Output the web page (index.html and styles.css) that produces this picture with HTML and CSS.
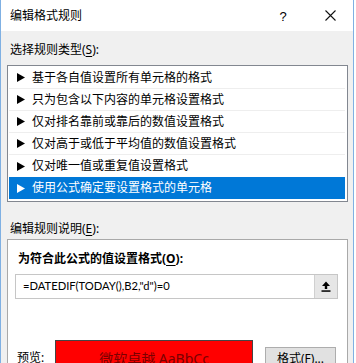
FILE: index.html
```html
<!DOCTYPE html>
<html>
<head>
<meta charset="utf-8">
<link rel="stylesheet" href="styles.css">
</head>
<body>
<div class="window">
  <div class="titlebar">
    <span class="title">编辑格式规则</span>
    <span class="help">?</span>
    <span class="close">
      <svg width="11" height="11" viewBox="0 0 11 11"><path d="M0.5 0.5 L10.5 10.5 M10.5 0.5 L0.5 10.5" stroke="#111" stroke-width="1.1" fill="none"/></svg>
    </span>
  </div>
  <div class="content">
    <div class="label first">选择规则类型(<u>S</u>):</div>
    <div class="listbox">
      <div class="row sep"><svg class="arrow" width="8" height="9" viewBox="0 0 8 9"><polygon points="0,0 8,4.5 0,9" fill="#000"/></svg><span>基于各自值设置所有单元格的格式</span></div>
      <div class="row sep"><svg class="arrow" width="8" height="9" viewBox="0 0 8 9"><polygon points="0,0 8,4.5 0,9" fill="#000"/></svg><span>只为包含以下内容的单元格设置格式</span></div>
      <div class="row sep"><svg class="arrow" width="8" height="9" viewBox="0 0 8 9"><polygon points="0,0 8,4.5 0,9" fill="#000"/></svg><span>仅对排名靠前或靠后的数值设置格式</span></div>
      <div class="row sep"><svg class="arrow" width="8" height="9" viewBox="0 0 8 9"><polygon points="0,0 8,4.5 0,9" fill="#000"/></svg><span>仅对高于或低于平均值的数值设置格式</span></div>
      <div class="row"><svg class="arrow" width="8" height="9" viewBox="0 0 8 9"><polygon points="0,0 8,4.5 0,9" fill="#000"/></svg><span>仅对唯一值或重复值设置格式</span></div>
      <div class="row selected"><svg class="arrow" width="8" height="9" viewBox="0 0 8 9"><polygon points="0,0 8,4.5 0,9" fill="#fff"/></svg><span>使用公式确定要设置格式的单元格</span></div>
    </div>
    <div class="label second">编辑规则说明(<u>E</u>):</div>
    <div class="panel">
      <div class="bold-label">为符合此公式的值设置格式(<u>O</u>):</div>
      <div class="input">
        <span class="formula">=DATEDIF(TODAY(),B2,"d")=0</span>
        <span class="pick">
          <svg width="10" height="11" viewBox="0 0 10 11"><path d="M5 0.5 L9 5 L6.2 5 L6.2 8 L3.8 8 L3.8 5 L1 5 Z" fill="#000"/><rect x="0.5" y="9.3" width="9" height="1.5" fill="#000"/></svg>
        </span>
      </div>
      <div class="divider"></div>
      <div class="preview-row">
        <span class="preview-label">预览:</span>
        <div class="preview">微软卓越 AaBbCc</div>
        <div class="button">格式(<u>F</u>)...</div>
      </div>
    </div>
  </div>
</div>
</body>
</html>
```

FILE: styles.css
```css
html, body {
  margin: 0;
  padding: 0;
  background: #ffffff;
}
body {
  width: 356px;
  height: 363px;
  overflow: hidden;
  font-family: "Noto Sans", "Noto Sans CJK SC", sans-serif;
  font-size: 12px;
  color: #000;
}
.window {
  width: 352px;
  height: 363px;
  border-left: 1px solid #7fb0e3;
  border-right: 1px solid #7fb0e3;
  background: #f0f0f0;
  display: flex;
  flex-direction: column;
}
.titlebar {
  height: 31px;
  background: #ffffff;
  display: flex;
  align-items: center;
  flex-shrink: 0;
}
.title {
  margin-left: 9px;
  line-height: 16px;
  flex: 1;
}
.help {
  font-family: "Liberation Sans", sans-serif;
  font-size: 13px;
  width: 12px;
  text-align: center;
  margin-right: 36px;
  margin-top: 1px;
}
.close {
  display: flex;
  margin-right: 17px;
}
.content {
  padding: 0 5px 0 6px;
  display: flex;
  flex-direction: column;
}
.label {
  line-height: 16px;
  padding-left: 3px;
}
.label.first {
  margin-top: 11px;
  margin-bottom: 7px;
}
.label.second {
  margin-top: 19px;
  margin-bottom: 2px;
}
u {
  text-decoration: underline;
  text-underline-offset: 2px;
}
.listbox {
  background: #ffffff;
  border: 1px solid #828790;
  padding: 1px 2px 2px 1px;
  display: flex;
  flex-direction: column;
}
.row {
  height: 22px;
  display: flex;
  align-items: center;
  box-sizing: border-box;
  line-height: 16px;
}
.row.sep {
  border-bottom: 1px solid #eeeeee;
}
.arrow {
  margin-left: 8px;
  margin-right: 7px;
  flex-shrink: 0;
}
.row.selected {
  background: #0078d7;
  color: #ffffff;
}
.panel {
  background: #ffffff;
  border: 1px solid #a9a9a9;
  padding: 0 3px;
  height: 140px;
  display: flex;
  flex-direction: column;
}
.bold-label {
  font-weight: bold;
  line-height: 16px;
  margin-top: 11px;
  padding-left: 7px;
}
.input {
  margin: 7px 6px 0 4px;
  height: 25px;
  box-sizing: border-box;
  border: 1px solid #c6c6c6;
  display: flex;
  align-items: center;
  padding-left: 7px;
}
.formula {
  flex: 1;
  font-family: "Lato", "Noto Sans", sans-serif;
  font-size: 11.2px;
  line-height: 16px;
  margin-top: -2px;
}
.pick {
  width: 22px;
  height: 23px;
  background: #e6e6e6;
  border-left: 1px solid #d0d0d0;
  display: flex;
  align-items: center;
  justify-content: center;
}
.divider {
  height: 1px;
  background: #c8c8c8;
  margin: 21px 0 0 0;
}
.preview-row {
  display: flex;
  align-items: flex-start;
  margin-top: 20px;
}
.preview-label {
  margin-left: 6px;
  margin-top: 10px;
  line-height: 16px;
  width: 38px;
}
.preview {
  width: 196px;
  height: 40px;
  background: #ff0000;
  border: 1px solid #444;
  color: #7a0000;
  text-align: center;
  line-height: 36px;
  font-size: 14px;
}
.button {
  margin-left: 12px;
  margin-top: 7px;
  width: 69px;
  height: 24px;
  background: #e1e1e1;
  border: 1px solid #adadad;
  text-align: center;
  line-height: 22px;
}
```
